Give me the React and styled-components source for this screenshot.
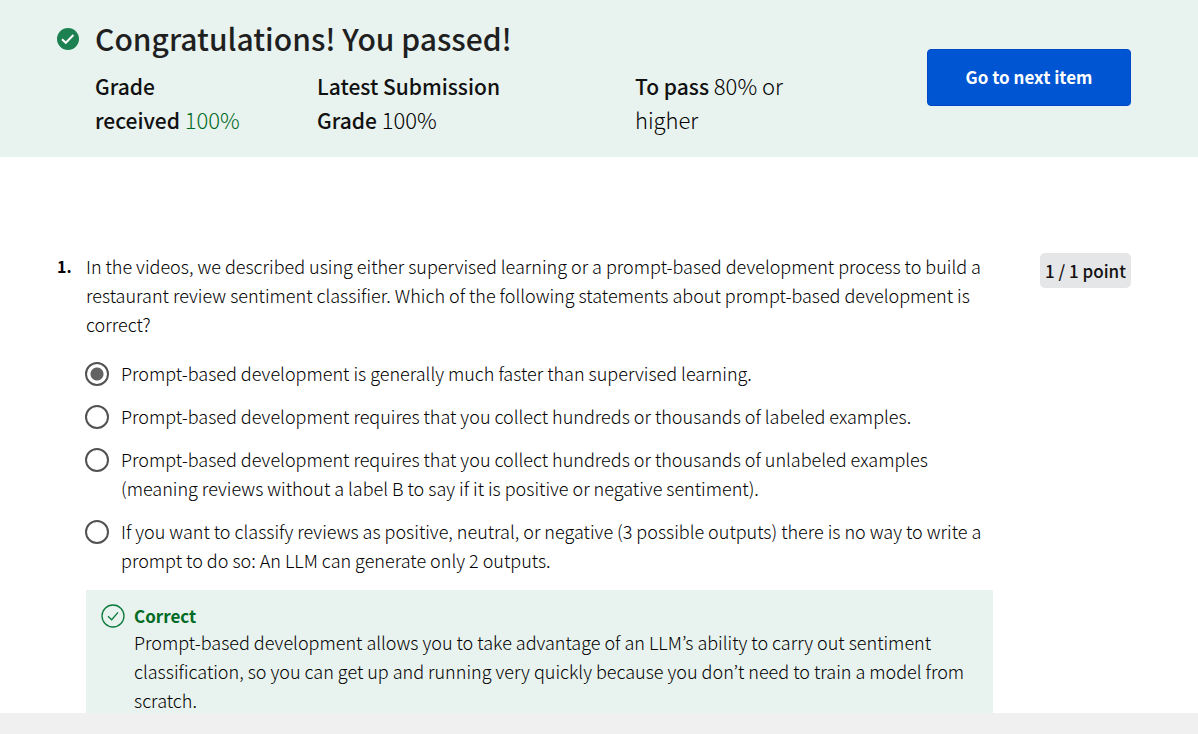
import React, { useState } from "react";
import styled, { createGlobalStyle } from "styled-components";

const GlobalStyle = createGlobalStyle`
  * { box-sizing: border-box; }
  body {
    margin: 0;
    background: #f0f0f0;
    color: #000;
    font-family: "Noto Sans CJK KR", "Noto Sans", sans-serif;
    font-size: 18px;
    font-weight: 300;
    line-height: 29px;
  }
  h1, h2, p { margin: 0; }
`;

const Page = styled.div`
  display: flex;
  flex-direction: column;
  min-height: 100vh;
`;

const Banner = styled.header`
  display: flex;
  justify-content: space-between;
  align-items: flex-start;
  padding: 16px 67px 21px 57px;
  background: #e8f2ee;
`;

const Result = styled.div`
  display: grid;
  grid-template-columns: 22px 1fr;
  column-gap: 16px;
  align-items: center;
`;

const Title = styled.h1`
  color: #1f1f1f;
  font-size: 30px;
  font-weight: 500;
  line-height: 44px;
`;

const Grades = styled.div`
  grid-column: 2;
  display: grid;
  grid-template-columns: 222px 318px auto;
  padding-top: 8px;
  font-size: 22px;
  line-height: 34px;
`;

const Label = styled.span`
  color: #111;
  font-size: 21px;
  font-weight: 500;
  line-height: 1;
`;

const Passed = styled.span`
  color: #006b25;
`;

const NextButton = styled.button`
  margin-top: 33px;
  width: 204px;
  height: 57px;
  padding: 0 0 2px;
  border: 1px solid #0048c8;
  border-radius: 4px;
  background: #0056d2;
  color: #fff;
  font: inherit;
  font-size: 17px;
  font-weight: 700;
  cursor: pointer;
`;

const Content = styled.main`
  display: flex;
  align-items: flex-start;
  flex: 1;
  padding: 95px 67px 0 57px;
  background: #fff;
`;

const QuestionNumber = styled.div`
  width: 29px;
  flex-shrink: 0;
  font-size: 16px;
  font-weight: 700;
`;

const Question = styled.fieldset`
  flex: 1;
  min-width: 0;
  margin: 0 47px 0 0;
  padding: 0;
  border: 0;
`;

const Prompt = styled.legend`
  padding: 0 0 20px;
`;

const Options = styled.div`
  display: flex;
  flex-direction: column;
  gap: 14px;
  padding-bottom: 15px;
`;

const Option = styled.label`
  display: flex;
  align-items: flex-start;
  gap: 12px;
  cursor: pointer;
`;

const Radio = styled.input`
  appearance: none;
  flex-shrink: 0;
  width: 24px;
  height: 24px;
  margin: 3px 0 0 -1px;
  border: 2px solid #525252;
  border-radius: 50%;
  background: #fff;
  &:checked {
    background: radial-gradient(circle, #636363 6px, #fff 7px);
  }
`;

const Feedback = styled.section`
  display: flex;
  align-items: flex-start;
  gap: 9px;
  padding: 14px 16px 0 15px;
  background: #e8f2ee;
`;

const FeedbackTitle = styled.h2`
  font-size: 17px;
  font-weight: 700;
  line-height: 24px;
  color: #006b25;
`;

const Points = styled.div`
  flex-shrink: 0;
  width: 91px;
  margin-top: 1px;
  border-radius: 5px;
  background: #e5e6e8;
  color: #111;
  font-size: 17px;
  font-weight: 500;
  line-height: 35px;
  text-align: center;
`;

const Footer = styled.footer`
  position: sticky;
  bottom: 0;
  height: 21px;
  margin-top: -2px;
  background: #f0f0f0;
`;

const Icon = styled.svg`
  display: block;
  flex-shrink: 0;
`;

const answers = [
  "Prompt-based development is generally much faster than supervised learning.",
  "Prompt-based development requires that you collect hundreds or thousands of labeled examples.",
  "Prompt-based development requires that you collect hundreds or thousands of unlabeled examples (meaning reviews without a label B to say if it is positive or negative sentiment).",
  "If you want to classify reviews as positive, neutral, or negative (3 possible outputs) there is no way to write a prompt to do so: An LLM can generate only 2 outputs.",
];

export default function App() {
  const [selected, setSelected] = useState(0);
  return (
    <Page>
      <GlobalStyle />
      <Banner>
        <Result>
          <Icon width="22" height="24" viewBox="0 -2 22 24" aria-hidden="true">
            <circle cx="11" cy="11" r="11" fill="#1c8050" />
            <path d="M5 11.2l3.8 3.6 7.6-7.8" fill="none" stroke="#fff" strokeWidth="2" />
          </Icon>
          <Title>Congratulations! You passed!</Title>
          <Grades>
            <p><Label>Grade<br />received</Label> <Passed>100%</Passed></p>
            <p><Label>Latest Submission<br />Grade</Label> 100%</p>
            <p><Label>To pass</Label> 80% or<br />higher</p>
          </Grades>
        </Result>
        <NextButton type="button">Go to next item</NextButton>
      </Banner>
      <Content>
        <QuestionNumber>1.</QuestionNumber>
        <Question>
          <Prompt>
            In the videos, we described using either supervised learning or a prompt-based
            development process to build a restaurant review sentiment classifier. Which of the
            following statements about prompt-based development is correct?
          </Prompt>
          <Options>
            {answers.map((text, i) => (
              <Option key={text}>
                <Radio type="radio" name="answer" checked={selected === i} onChange={() => setSelected(i)} />
                <span>{text}</span>
              </Option>
            ))}
          </Options>
          <Feedback>
            <Icon width="24" height="24" viewBox="0 0 24 24" aria-hidden="true" fill="none" stroke="#0b7a3b">
              <circle cx="12" cy="12" r="11" strokeWidth="1.3" />
              <path d="M7 12.3l3.7 3.4 6.3-7.4" strokeWidth="1.3" />
            </Icon>
            <div>
              <FeedbackTitle>Correct</FeedbackTitle>
              <p>
                Prompt-based development allows you to take advantage of an LLM’s ability to carry
                out sentiment classification, so you can get up and running very quickly because
                you don’t need to train a model from scratch.
              </p>
            </div>
          </Feedback>
        </Question>
        <Points>1 / 1 point</Points>
      </Content>
      <Footer />
    </Page>
  );
}
